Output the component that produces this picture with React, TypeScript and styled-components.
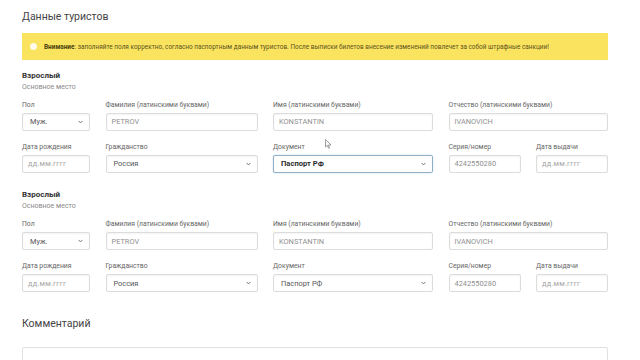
import React from "react";
import styled, { createGlobalStyle } from "styled-components";

const Global = createGlobalStyle`
  html, body { margin: 0; padding: 0; background: #ffffff; }
  body { font-family: Roboto, "Noto Sans", "Liberation Sans", sans-serif; overflow: hidden; }
`;

const Page = styled.div`
  position: relative;
  width: 640px;
  height: 360px;
  overflow: hidden;
  padding: 10px 32px 0 22px;
  box-sizing: border-box;
`;

const Title = styled.h1`
  margin: 0;
  font-size: 10.5px;
  line-height: 13px;
  font-weight: 400;
  color: #444;
`;

const Alert = styled.div`
  margin-top: 10px;
  height: 27px;
  background: #fae45f;
  display: flex;
  align-items: center;
  padding-left: 8px;
  gap: 7px;
  box-sizing: border-box;
  font-size: 6.45px;
  color: #5b5220;
  white-space: nowrap;
`;

const AlertIcon = styled.span`
  width: 7px;
  height: 7px;
  border-radius: 50%;
  background: #fffbe8;
  flex: none;
`;

const Strong = styled.b`
  font-weight: 700;
  color: #4a4210;
`;

const Block = styled.section<{ $mt: number }>`
  margin-top: ${(p) => p.$mt}px;
`;

const BlockTitle = styled.div`
  font-size: 8px;
  line-height: 11px;
  font-weight: 700;
  color: #333;
`;

const BlockSub = styled.div`
  margin-top: 1px;
  font-size: 7px;
  line-height: 11px;
  color: #8a8a8a;
`;

const Grid = styled.div`
  margin-top: 7px;
  display: grid;
  grid-template-columns: 68px 152px 160px 72px 72px;
  column-gap: 15.5px;
  row-gap: 11px;
`;

const Field = styled.div<{ $span?: number }>`
  display: flex;
  flex-direction: column;
  grid-column: span ${(p) => p.$span ?? 1};
`;

const Label = styled.div`
  font-size: 6.8px;
  line-height: 10px;
  color: #666;
  white-space: nowrap;
`;

const Control = styled.div<{ $focus?: boolean; $select?: boolean }>`
  margin-top: 3px;
  height: 18px;
  box-sizing: border-box;
  border: 1px solid ${(p) => (p.$focus ? "#8fb0c9" : "#dcdcdc")};
  border-radius: 2px;
  box-shadow: ${(p) =>
    p.$focus ? "0 0 2px rgba(100,150,200,0.35)" : "inset 0 1px 2px rgba(0,0,0,0.05)"};
  display: flex;
  align-items: center;
  justify-content: space-between;
  padding: 0 6px 0 ${(p) => (p.$select ? 7 : 5)}px;
  background: #fff;
`;

const Value = styled.span<{ $tone: "muted" | "normal" | "bold" | "placeholder" }>`
  font-size: ${(p) => (p.$tone === "bold" ? 7.6 : 7.4)}px;
  font-weight: ${(p) => (p.$tone === "bold" ? 700 : 400)};
  color: ${(p) =>
    p.$tone === "bold"
      ? "#2a2a2a"
      : p.$tone === "normal"
      ? "#555"
      : p.$tone === "placeholder"
      ? "#a8a8a8"
      : "#909090"};
  letter-spacing: ${(p) => (p.$tone === "placeholder" ? "0.2px" : "0")};
  white-space: nowrap;
`;

const Chevron = () => (
  <svg width="5" height="4" viewBox="0 0 5 4" fill="none">
    <path d="M0.6 0.9 L2.5 2.9 L4.4 0.9" stroke="#666" strokeWidth="0.9" />
  </svg>
);

const CommentTitle = styled.h2`
  margin: 25px 0 0;
  font-size: 10.5px;
  line-height: 14px;
  font-weight: 400;
  color: #444;
`;

const TextArea = styled.div`
  margin-top: 16px;
  height: 40px;
  border: 1px solid #e0e0e0;
  border-radius: 2px;
`;

const Cursor = styled.svg`
  position: absolute;
  left: 325px;
  top: 139px;
`;

type FieldDef = {
  label: string;
  value: string;
  tone: "muted" | "normal" | "bold" | "placeholder";
  select?: boolean;
  focus?: boolean;
  span?: number;
};

const rows = (focus: boolean): FieldDef[] => [
  { label: "Пол", value: "Муж.", tone: "normal", select: true },
  { label: "Фамилия (латинскими буквами)", value: "PETROV", tone: "muted" },
  { label: "Имя (латинскими буквами)", value: "KONSTANTIN", tone: "muted" },
  { label: "Отчество (латинскими буквами)", value: "IVANOVICH", tone: "muted", span: 2 },
  { label: "Дата рождения", value: "дд.мм.гггг", tone: "placeholder" },
  { label: "Гражданство", value: "Россия", tone: "normal", select: true },
  {
    label: "Документ",
    value: "Паспорт РФ",
    tone: focus ? "bold" : "normal",
    select: true,
    focus,
  },
  { label: "Серия/номер", value: "4242550280", tone: "muted" },
  { label: "Дата выдачи", value: "дд.мм.гггг", tone: "placeholder" },
];

const Tourist = ({ focus, mt }: { focus: boolean; mt: number }) => (
  <Block $mt={mt}>
    <BlockTitle>Взрослый</BlockTitle>
    <BlockSub>Основное место</BlockSub>
    <Grid>
      {rows(focus).map((f, i) => (
        <Field key={i} $span={f.span}>
          <Label>{f.label}</Label>
          <Control $focus={f.focus} $select={f.select}>
            <Value $tone={f.tone}>{f.value}</Value>
            {f.select && <Chevron />}
          </Control>
        </Field>
      ))}
    </Grid>
  </Block>
);

export default function App() {
  return (
    <>
      <Global />
      <Page>
        <Title>Данные туристов</Title>
        <Alert>
          <AlertIcon />
          <span>
            <Strong>Внимание</Strong>: заполняйте поля корректно, согласно паспортным данным
            туристов. После выписки билетов внесение изменений повлечет за собой штрафные
            санкции!
          </span>
        </Alert>
        <Tourist focus mt={9.5} />
        <Tourist focus={false} mt={16.5} />
        <CommentTitle>Комментарий</CommentTitle>
        <TextArea />
        <Cursor width="7" height="10" viewBox="0 0 7 10">
          <path d="M0.5 0.5 L0.5 8 L2.3 6.3 L3.6 9.2 L4.6 8.8 L3.4 6 L6 6 Z" fill="#fff" stroke="#777" strokeWidth="0.7" />
        </Cursor>
      </Page>
    </>
  );
}
